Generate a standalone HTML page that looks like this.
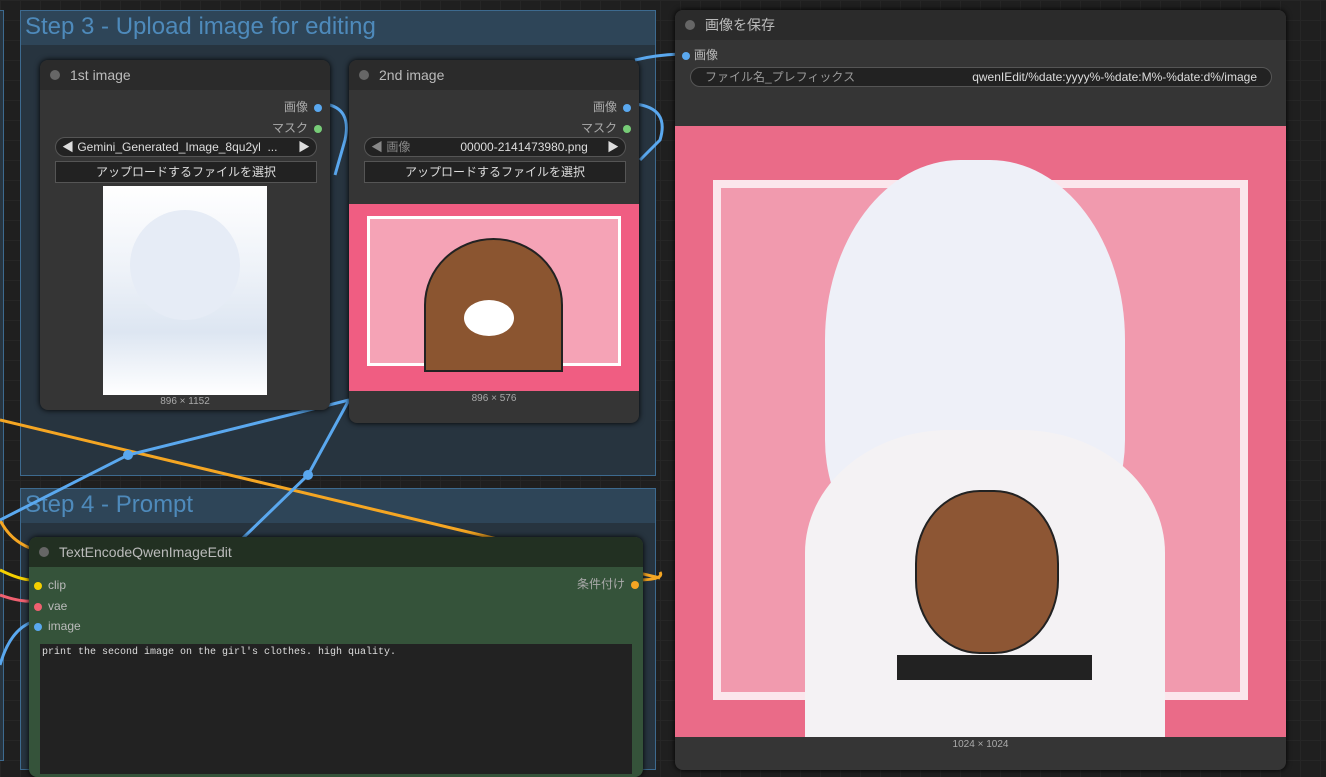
<!DOCTYPE html><html><head><meta charset="utf-8"><style>
body{margin:0;width:1326px;height:759px;overflow:hidden;background:#1f1f1f;font-family:"Liberation Sans","Noto Sans CJK JP",sans-serif;position:relative;
background-image:linear-gradient(#262626 1px,transparent 1px),linear-gradient(90deg,#262626 1px,transparent 1px);background-size:20px 20px}
.a{position:absolute}
.grp{background:#27343f;border:1px solid #3d6a8f}
.gh{background:#2e4558;height:34px;color:#4e8abb;font-size:24px;padding-left:4px;line-height:32px}
.node{background:#353535;border-radius:8px;overflow:hidden;box-shadow:0 0 6px #000}
.nh{background:#2b2b2b;height:30px;color:#bbb;font-size:14px;line-height:30px;padding-left:30px;position:relative}
.nh:before{content:"";position:absolute;left:10px;top:10px;width:10px;height:10px;border-radius:50%;background:#666}
.out{color:#aaa;font-size:12px;text-align:right}
.dot{display:inline-block;width:8px;height:8px;border-radius:50%;margin-left:6px;vertical-align:-1px}
.cmb{background:#222;border:1px solid #555;border-radius:10px;height:18px;color:#ddd;font-size:12px;line-height:18px}
.btn{background:#222;border:1px solid #555;height:20px;color:#ddd;font-size:12px;line-height:20px;text-align:center}
.cap{color:#aaa;font-size:10px;text-align:center}
</style></head><body>
<div class="a grp" style="left:-10px;top:10px;width:12px;height:749px"></div>
<div class="a grp" style="left:20px;top:10px;width:634px;height:464px"><div class="gh">Step 3 - Upload image for editing</div></div>
<div class="a grp" style="left:20px;top:488px;width:634px;height:280px"><div class="gh">Step 4 - Prompt</div></div>

<svg class="a" style="left:0;top:0" width="1326" height="759">
<g fill="none" stroke-width="3">
<path d="M0 420 L660 578" stroke="#f5a623"/>
<path d="M0 520 Q10 540 30 548" stroke="#f5a623"/>
<path d="M0 570 Q20 580 32 580" stroke="#f5d000"/>
<path d="M0 595 Q20 602 32 601" stroke="#f06070"/>
<path d="M0 665 Q10 630 32 622" stroke="#5aa8ef"/>
<path d="M0 520 L128 455 L349 400" stroke="#5aa8ef"/>
<path d="M210 570 L308 475 L349 400" stroke="#5aa8ef"/>
<path d="M325 104 Q352 108 345 140 L335 175" stroke="#5aa8ef"/>
<path d="M635 104 Q670 108 660 140 L640 160" stroke="#5aa8ef"/>
<path d="M635 60 Q655 55 680 54" stroke="#5aa8ef"/>
<path d="M636 580 Q665 580 660 572" stroke="#f5a623"/>
</g>
<circle cx="128" cy="455" r="5" fill="#5aa8ef"/><circle cx="308" cy="475" r="5" fill="#5aa8ef"/>
</svg>

<div class="a node" style="left:40px;top:60px;width:290px;height:350px">
<div class="nh">1st image</div>
<div class="out" style="margin:8px 8px 0 0">画像<span class="dot" style="background:#5aa8ef"></span></div>
<div class="out" style="margin:4px 8px 0 0">マスク<span class="dot" style="background:#7c7"></span></div>
<div class="a cmb" style="left:15px;top:77px;width:260px;padding-left:0"><span style="margin-left:6px">◀ Gemini_Generated_Image_8qu2yl &nbsp;...</span><span style="float:right;margin-right:6px">▶</span></div>
<div class="a btn" style="left:15px;top:101px;width:260px">アップロードするファイルを選択</div>
<div class="a" style="left:63px;top:126px;width:164px;height:209px;background:linear-gradient(#fff 0%,#eef2f8 40%,#dde6f2 70%,#fff)"></div>
<div class="a" style="left:90px;top:150px;width:110px;height:110px;border-radius:50%;background:#e6ecf6"></div>
<div class="a cap" style="left:0;top:336px;width:290px">896 × 1152</div>
</div>

<div class="a node" style="left:349px;top:60px;width:290px;height:363px">
<div class="nh">2nd image</div>
<div class="out" style="margin:8px 8px 0 0">画像<span class="dot" style="background:#5aa8ef"></span></div>
<div class="out" style="margin:4px 8px 0 0">マスク<span class="dot" style="background:#7c7"></span></div>
<div class="a cmb" style="left:15px;top:77px;width:260px"><span style="margin-left:6px;color:#888">◀ 画像</span><span style="margin-left:50px">00000-2141473980.png</span><span style="float:right;margin-right:6px">▶</span></div>
<div class="a btn" style="left:15px;top:101px;width:260px">アップロードするファイルを選択</div>
<div class="a" style="left:0;top:144px;width:290px;height:187px;background:#f05d82"></div>
<div class="a" style="left:18px;top:156px;width:254px;height:150px;background:#f5a3b6;border:3px solid #fff;box-sizing:border-box"></div>
<div class="a" style="left:75px;top:178px;width:135px;height:130px;border-radius:50% 50% 0 0;background:#8b5530;border:2px solid #222"></div>
<div class="a" style="left:115px;top:240px;width:50px;height:36px;border-radius:50%;background:#fff"></div>
<div class="a cap" style="left:0;top:333px;width:290px">896 × 576</div>
</div>

<div class="a node" style="left:29px;top:537px;width:614px;height:240px;background:#35533a">
<div class="nh" style="background:#223022">TextEncodeQwenImageEdit</div>
<div class="a" style="left:5px;top:38px;color:#bbb;font-size:12px;line-height:20.5px">
<div><span class="dot" style="background:#f5d000;margin:0 6px 0 0"></span>clip</div>
<div><span class="dot" style="background:#f06070;margin:0 6px 0 0"></span>vae</div>
<div><span class="dot" style="background:#5aa8ef;margin:0 6px 0 0"></span>image</div></div>
<div class="a out" style="right:4px;top:38px">条件付け<span class="dot" style="background:#f5a623"></span></div>
<div class="a" style="left:11px;top:107px;width:592px;height:130px;background:#222;color:#ddd;font:10px 'Liberation Mono',monospace;padding:3px 2px;box-sizing:border-box">print the second image on the girl's clothes. high quality.</div>
</div>

<div class="a node" style="left:675px;top:10px;width:611px;height:760px">
<div class="nh">画像を保存</div>
<div style="color:#bbb;font-size:12px;margin:6px 0 0 7px"><span class="dot" style="background:#5aa8ef;margin:0 4px 0 0"></span>画像</div>
<div class="a cmb" style="left:15px;top:57px;width:580px;color:#999"><span style="margin-left:14px">ファイル名_プレフィックス</span><span style="float:right;margin-right:14px;color:#ddd">qwenIEdit/%date:yyyy%-%date:M%-%date:d%/image</span></div>
<div class="a" style="left:0;top:116px;width:611px;height:611px;background:#ea6b88"></div>
<div class="a" style="left:38px;top:170px;width:535px;height:520px;border:8px solid #fbe6ec;background:#f19aae;box-sizing:border-box"></div>
<div class="a" style="left:150px;top:150px;width:300px;height:400px;border-radius:45% 45% 30% 30%;background:#eef0f8"></div>
<div class="a" style="left:130px;top:420px;width:360px;height:307px;border-radius:40% 40% 0 0;background:#f4f2f4"></div>
<div class="a" style="left:240px;top:480px;width:140px;height:160px;border-radius:45%;background:#8d5634;border:2px solid #222"></div>
<div class="a" style="left:222px;top:645px;width:195px;height:25px;background:#222"></div>
<div class="a cap" style="left:0;top:729px;width:611px">1024 × 1024</div>
</div>
</body></html>
